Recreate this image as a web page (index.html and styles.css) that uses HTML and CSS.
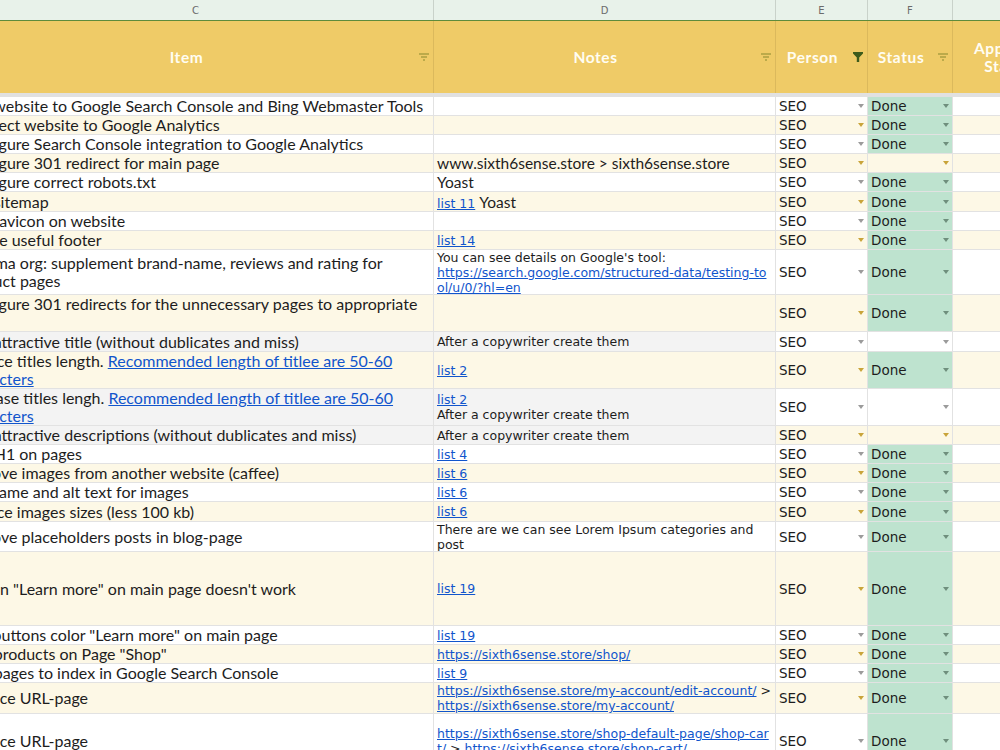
FILE: index.html
```html
<!DOCTYPE html>
<html lang="en">
<head>
  <meta charset="UTF-8">
  <title>SEO checklist</title>
  <link rel="stylesheet" href="styles.css">
</head>
<body>

  <div class="sheet">

    <!-- column letters -->
    <div class="cols">
      <div>C</div><div>D</div><div>E</div><div>F</div><div>G</div>
    </div>

    <!-- frozen header -->
    <div class="head">
      <div><span>Item</span><svg class="flt" viewBox="0 0 10 8"><path d="M0 1h10M2 4h6M4 7h2"/></svg></div>
      <div><span>Notes</span><svg class="flt" viewBox="0 0 10 8"><path d="M0 1h10M2 4h6M4 7h2"/></svg></div>
      <div><span>Person</span><svg class="fun" viewBox="0 0 10 10"><path d="M0 0h10v1.5L6.2 5.5V10H3.8V5.5L0 1.5z"/></svg></div>
      <div><span>Status</span><svg class="flt" viewBox="0 0 10 8"><path d="M0 1h10M2 4h6M4 7h2"/></svg></div>
      <div><span>Approval Status</span><svg class="flt" viewBox="0 0 10 8"><path d="M0 1h10M2 4h6M4 7h2"/></svg></div>
    </div>

    <div class="row">
      <div class="it">Add website to Google Search Console and Bing Webmaster Tools</div>
      <div class="nt"></div>
      <div class="ps">SEO<i></i></div>
      <div class="st gn">Done<i></i></div>
      <div></div>
    </div>
    <div class="row y">
      <div class="it">Connect website to Google Analytics</div>
      <div class="nt"></div>
      <div class="ps">SEO<i></i></div>
      <div class="st gn">Done<i></i></div>
      <div></div>
    </div>
    <div class="row">
      <div class="it">Configure Search Console integration to Google Analytics</div>
      <div class="nt"></div>
      <div class="ps">SEO<i></i></div>
      <div class="st gn">Done<i></i></div>
      <div></div>
    </div>
    <div class="row y">
      <div class="it">Configure 301 redirect for main page</div>
      <div class="nt"><span class="k">www.sixth6sense.store &gt; sixth6sense.store</span></div>
      <div class="ps">SEO<i></i></div>
      <div class="st"><i></i></div>
      <div></div>
    </div>
    <div class="row">
      <div class="it">Configure correct robots.txt</div>
      <div class="nt"><span class="k">Yoast</span></div>
      <div class="ps">SEO<i></i></div>
      <div class="st gn">Done<i></i></div>
      <div></div>
    </div>
    <div class="row y h20">
      <div class="it">Add sitemap</div>
      <div class="nt"><span><a href="#">list 11</a> <span class="k">Yoast</span></span></div>
      <div class="ps">SEO<i></i></div>
      <div class="st gn">Done<i></i></div>
      <div></div>
    </div>
    <div class="row">
      <div class="it">Add favicon on website</div>
      <div class="nt"></div>
      <div class="ps">SEO<i></i></div>
      <div class="st gn">Done<i></i></div>
      <div></div>
    </div>
    <div class="row y">
      <div class="it">Create useful footer</div>
      <div class="nt"><a href="#">list 14</a></div>
      <div class="ps">SEO<i></i></div>
      <div class="st gn">Done<i></i></div>
      <div></div>
    </div>
    <div class="row h45">
      <div class="it"><p>Schema org: supplement brand-name, reviews and rating for product pages</p></div>
      <div class="nt"><p>You can see details on Google's tool:<br><a class="brk" href="#">https://search.google.com/structured-data/testing-tool/u/0/?hl=en</a></p></div>
      <div class="ps">SEO<i></i></div>
      <div class="st gn">Done<i></i></div>
      <div></div>
    </div>
    <div class="row y h37">
      <div class="it"><p>Configure 301 redirects for the unnecessary pages to appropriate ones</p></div>
      <div class="nt"></div>
      <div class="ps">SEO<i></i></div>
      <div class="st gn">Done<i></i></div>
      <div></div>
    </div>
    <div class="row h20">
      <div class="it gr">Add attractive title (without dublicates and miss)</div>
      <div class="nt gr">After a copywriter create them</div>
      <div class="ps">SEO<i></i></div>
      <div class="st"><i></i></div>
      <div></div>
    </div>
    <div class="row y h37">
      <div class="it"><p>Reduce titles length. <a href="#">Recommended length of titlee are 50-60 characters</a></p></div>
      <div class="nt"><a href="#">list 2</a></div>
      <div class="ps">SEO<i></i></div>
      <div class="st gn">Done<i></i></div>
      <div></div>
    </div>
    <div class="row h37">
      <div class="it gr"><p>Increase titles lengh. <a href="#">Recommended length of titlee are 50-60 characters</a></p></div>
      <div class="nt gr"><p><a href="#">list 2</a><br>After a copywriter create them</p></div>
      <div class="ps">SEO<i></i></div>
      <div class="st"><i></i></div>
      <div></div>
    </div>
    <div class="row y">
      <div class="it gr">Add attractive descriptions (without dublicates and miss)</div>
      <div class="nt gr">After a copywriter create them</div>
      <div class="ps">SEO<i></i></div>
      <div class="st"><i></i></div>
      <div></div>
    </div>
    <div class="row">
      <div class="it">Add H1 on pages</div>
      <div class="nt"><a href="#">list 4</a></div>
      <div class="ps">SEO<i></i></div>
      <div class="st gn">Done<i></i></div>
      <div></div>
    </div>
    <div class="row y">
      <div class="it">Remove images from another website (caffee)</div>
      <div class="nt"><a href="#">list 6</a></div>
      <div class="ps">SEO<i></i></div>
      <div class="st gn">Done<i></i></div>
      <div></div>
    </div>
    <div class="row">
      <div class="it">File name and alt text for images</div>
      <div class="nt"><a href="#">list 6</a></div>
      <div class="ps">SEO<i></i></div>
      <div class="st gn">Done<i></i></div>
      <div></div>
    </div>
    <div class="row y h20">
      <div class="it">Reduce images sizes (less 100 kb)</div>
      <div class="nt"><a href="#">list 6</a></div>
      <div class="ps">SEO<i></i></div>
      <div class="st gn">Done<i></i></div>
      <div></div>
    </div>
    <div class="row h30">
      <div class="it">Remove placeholders posts in blog-page</div>
      <div class="nt"><p>There are we can see Lorem Ipsum categories and post</p></div>
      <div class="ps">SEO<i></i></div>
      <div class="st gn">Done<i></i></div>
      <div></div>
    </div>
    <div class="row y h74">
      <div class="it">Button "Learn more" on main page doesn't work</div>
      <div class="nt"><a href="#">list 19</a></div>
      <div class="ps">SEO<i></i></div>
      <div class="st gn">Done<i></i></div>
      <div></div>
    </div>
    <div class="row">
      <div class="it">Edit buttons color "Learn more" on main page</div>
      <div class="nt"><a href="#">list 19</a></div>
      <div class="ps">SEO<i></i></div>
      <div class="st gn">Done<i></i></div>
      <div></div>
    </div>
    <div class="row y">
      <div class="it">Add products on Page "Shop"</div>
      <div class="nt"><a href="#">https://sixth6sense.store/shop/</a></div>
      <div class="ps">SEO<i></i></div>
      <div class="st gn">Done<i></i></div>
      <div></div>
    </div>
    <div class="row">
      <div class="it">Add pages to index in Google Search Console</div>
      <div class="nt"><a href="#">list 9</a></div>
      <div class="ps">SEO<i></i></div>
      <div class="st gn">Done<i></i></div>
      <div></div>
    </div>
    <div class="row y h31">
      <div class="it">Replace URL-page</div>
      <div class="nt"><p><a href="#">https://sixth6sense.store/my-account/edit-account/</a> &gt; <a href="#">https://sixth6sense.store/my-account/</a></p></div>
      <div class="ps">SEO<i></i></div>
      <div class="st gn">Done<i></i></div>
      <div></div>
    </div>
    <div class="row h55">
      <div class="it">Replace URL-page</div>
      <div class="nt"><p class="brk"><a href="#">https://sixth6sense.store/shop-default-page/shop-cart/</a> &gt; <a href="#">https://sixth6sense.store/shop-cart/</a></p></div>
      <div class="ps">SEO<i></i></div>
      <div class="st gn">Done<i></i></div>
      <div></div>
    </div>

  </div>

</body>
</html>
```

FILE: styles.css
```css
:root{
  --hdr:#efcb67;
  --cream:#fdf8e6;
  --grey:#f3f3f3;
  --green:#bee3cf;
  --line:#e2e2e2;
  --link:#1155cc;
  --ink:#1d1d1d;
}
*{box-sizing:border-box;margin:0;padding:0}
body{
  background:#fff;
  overflow:hidden;
  font-family:Lato,sans-serif;
  color:var(--ink);
}
.sheet{
  margin-left:-42px;
  width:1123px;
}
/* shared column widths */
.cols,.head,.row{
  display:grid;
  grid-template-columns:476px 342px 92px 85px 128px;
}
/* column letters */
.cols{
  height:21px;
  background:#e8f2ea;
  border-bottom:1px solid #5e8b3b;
  font:10px "DejaVu Sans",sans-serif;
  color:#6b6b6b;
}
.cols div{
  display:flex;
  align-items:center;
  justify-content:center;
  border-right:1px solid #c9d2ca;
}
/* header row */
.head{
  height:76px;
  background:var(--hdr);
  border-bottom:4px solid #e1e1e1;
}
.head div{
  display:flex;
  align-items:center;
  gap:4px;
  padding-right:4px;
  border-right:1px solid #dbb95c;
}
.head span{
  flex:1;
  text-align:center;
  color:#fffdf2;
  font-weight:700;
  font-size:15.5px;
  letter-spacing:.6px;
  line-height:18px;
}
.head div:last-child span{padding:0 6px}
.flt{width:10px;height:8px;flex:none}
.flt path{stroke:#8a8a2e;stroke-width:1.2;fill:none}
.fun{width:10px;height:10px;flex:none}
.fun path{fill:#3d5b1b}
/* data rows */
.row{
  height:19px;
  border-bottom:1px solid var(--line);
}
.row > div{
  display:flex;
  align-items:center;
  padding:0 3px;
  overflow:hidden;
  border-right:1px solid var(--line);
}
.y{background:var(--cream)}
.h20{height:20px}
.h30{height:30px}
.h31{height:31px}
.h37{height:37px}
.h45{height:45px}
.h55{height:55px}
.h74{height:74px}
.row > .gr{background:var(--grey)}
.row > .gn{background:var(--green)}
/* item column */
.it{
  font-size:16px;
  line-height:18px;
  white-space:nowrap;
}
.it p{white-space:normal}
/* notes column */
.nt{
  font:12.5px/15px "DejaVu Sans",Verdana,sans-serif;
}
.nt .k{font:15.5px Lato,sans-serif}
a{color:var(--link)}
.brk{word-break:break-all}
/* person / status dropdown cells */
.ps,.st{
  justify-content:space-between;
  font:13.5px "DejaVu Sans",Verdana,sans-serif;
}
.ps i,.st i{
  margin-left:auto;
  width:0;height:0;
  border-left:3.5px solid transparent;
  border-right:3.5px solid transparent;
  border-top:4px solid #9b9b9b;
}
.y .ps i,.y .st:not(.gn) i{border-top-color:#c9a43a}
.st.gn i{border-top-color:#6f8f7d}
```
